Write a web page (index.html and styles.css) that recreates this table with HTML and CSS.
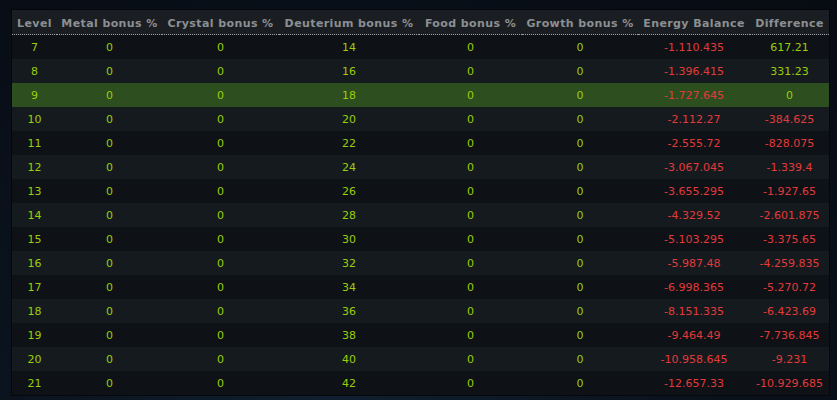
FILE: index.html
```html
<!DOCTYPE html>
<html>
<head>
<meta charset="utf-8">
<link rel="stylesheet" href="styles.css">
</head>
<body>
<div class="panel">
<table class="grid">
<colgroup>
<col class="c-level"><col class="c-metal"><col class="c-crystal"><col class="c-deut"><col class="c-food"><col class="c-growth"><col class="c-energy"><col class="c-diff">
</colgroup>
<thead>
<tr><th>Level</th><th>Metal bonus %</th><th>Crystal bonus %</th><th>Deuterium bonus %</th><th>Food bonus %</th><th>Growth bonus %</th><th>Energy Balance</th><th>Difference</th></tr>
</thead>
<tbody>
<tr class="odd"><td>7</td><td>0</td><td>0</td><td>14</td><td>0</td><td>0</td><td class="neg">-1.110.435</td><td>617.21</td></tr>
<tr class="even"><td>8</td><td>0</td><td>0</td><td>16</td><td>0</td><td>0</td><td class="neg">-1.396.415</td><td>331.23</td></tr>
<tr class="current"><td>9</td><td>0</td><td>0</td><td>18</td><td>0</td><td>0</td><td class="neg">-1.727.645</td><td>0</td></tr>
<tr class="even"><td>10</td><td>0</td><td>0</td><td>20</td><td>0</td><td>0</td><td class="neg">-2.112.27</td><td class="neg">-384.625</td></tr>
<tr class="odd"><td>11</td><td>0</td><td>0</td><td>22</td><td>0</td><td>0</td><td class="neg">-2.555.72</td><td class="neg">-828.075</td></tr>
<tr class="even"><td>12</td><td>0</td><td>0</td><td>24</td><td>0</td><td>0</td><td class="neg">-3.067.045</td><td class="neg">-1.339.4</td></tr>
<tr class="odd"><td>13</td><td>0</td><td>0</td><td>26</td><td>0</td><td>0</td><td class="neg">-3.655.295</td><td class="neg">-1.927.65</td></tr>
<tr class="even"><td>14</td><td>0</td><td>0</td><td>28</td><td>0</td><td>0</td><td class="neg">-4.329.52</td><td class="neg">-2.601.875</td></tr>
<tr class="odd"><td>15</td><td>0</td><td>0</td><td>30</td><td>0</td><td>0</td><td class="neg">-5.103.295</td><td class="neg">-3.375.65</td></tr>
<tr class="even"><td>16</td><td>0</td><td>0</td><td>32</td><td>0</td><td>0</td><td class="neg">-5.987.48</td><td class="neg">-4.259.835</td></tr>
<tr class="odd"><td>17</td><td>0</td><td>0</td><td>34</td><td>0</td><td>0</td><td class="neg">-6.998.365</td><td class="neg">-5.270.72</td></tr>
<tr class="even"><td>18</td><td>0</td><td>0</td><td>36</td><td>0</td><td>0</td><td class="neg">-8.151.335</td><td class="neg">-6.423.69</td></tr>
<tr class="odd"><td>19</td><td>0</td><td>0</td><td>38</td><td>0</td><td>0</td><td class="neg">-9.464.49</td><td class="neg">-7.736.845</td></tr>
<tr class="even"><td>20</td><td>0</td><td>0</td><td>40</td><td>0</td><td>0</td><td class="neg">-10.958.645</td><td class="neg">-9.231</td></tr>
<tr class="odd"><td>21</td><td>0</td><td>0</td><td>42</td><td>0</td><td>0</td><td class="neg">-12.657.33</td><td class="neg">-10.929.685</td></tr>
</tbody>
</table>
</div>
</body>
</html>
```
FILE: styles.css
```css
html, body {
  margin: 0;
  padding: 0;
}
body {
  width: 837px;
  height: 400px;
  overflow: hidden;
  background: radial-gradient(ellipse at 40% 100%, #102030 0%, #0a121c 50%, #070b12 100%);
  font-family: "DejaVu Sans", Verdana, sans-serif;
  font-size: 11px;
}
.panel {
  margin: 10px 0 0 12px;
  width: 817px;
  background: #0f1216;
  box-shadow: 0 0 0 1px #05070a;
}
.grid {
  width: 817px;
  border-collapse: collapse;
  table-layout: fixed;
}
.c-level { width: 45px; }
.c-metal { width: 105px; }
.c-crystal { width: 117px; }
.c-deut { width: 140px; }
.c-food { width: 103px; }
.c-growth { width: 116px; }
.c-energy { width: 112px; }
.c-diff { width: 79px; }
.grid th {
  height: 22px;
  padding: 2px 0 0 0;
  background: #1a1e22;
  color: #8c8f92;
  font-weight: bold;
  letter-spacing: 0.4px;
  text-align: center;
  white-space: nowrap;
  border-bottom: 1px dotted #a0a3a6;
}
.grid td {
  height: 24px;
  padding: 0;
  text-align: center;
  color: #9acd0a;
  white-space: nowrap;
}
.grid tr.odd td { background: #0e1115; }
.grid tr.even td { background: #151a1e; }
.grid tr.current td { background: #2d4f1f; }
.grid td.neg { color: #e23a3a; }
```
